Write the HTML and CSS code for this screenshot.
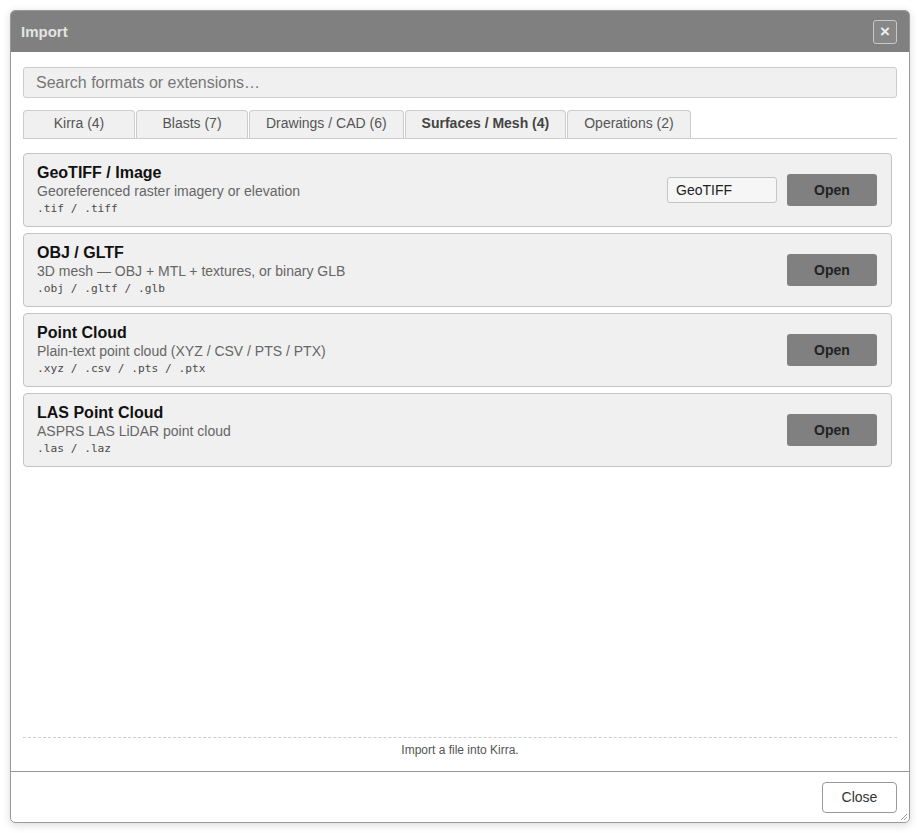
FILE: index.html
```html
<!DOCTYPE html>
<html>
    <head>
        <meta charset='utf-8'>
        <title>Import</title>
        <link rel="stylesheet" href="styles.css">
    </head>
    <body>
        <div class="dialog">
            <div class="titlebar">
                <span class="title">Import</span>
                <button class="x-btn">&times;</button>
            </div>
            <div class="content">
                <input class="search" type="text" placeholder="Search formats or extensions…">
                <div class="tabs">
                    <div class="tab">Kirra (4)</div>
                    <div class="tab">Blasts (7)</div>
                    <div class="tab">Drawings / CAD (6)</div>
                    <div class="tab active">Surfaces / Mesh (4)</div>
                    <div class="tab">Operations (2)</div>
                </div>
                <div class="list">
                    <div class="card">
                        <div class="info">
                            <div class="name">GeoTIFF / Image</div>
                            <div class="desc">Georeferenced raster imagery or elevation</div>
                            <div class="ext">.tif / .tiff</div>
                        </div>
                        <input class="kind" type="text" value="GeoTIFF">
                        <button class="open">Open</button>
                    </div>
                    <div class="card">
                        <div class="info">
                            <div class="name">OBJ / GLTF</div>
                            <div class="desc">3D mesh — OBJ + MTL + textures, or binary GLB</div>
                            <div class="ext">.obj / .gltf / .glb</div>
                        </div>
                        <button class="open">Open</button>
                    </div>
                    <div class="card">
                        <div class="info">
                            <div class="name">Point Cloud</div>
                            <div class="desc">Plain-text point cloud (XYZ / CSV / PTS / PTX)</div>
                            <div class="ext">.xyz / .csv / .pts / .ptx</div>
                        </div>
                        <button class="open">Open</button>
                    </div>
                    <div class="card">
                        <div class="info">
                            <div class="name">LAS Point Cloud</div>
                            <div class="desc">ASPRS LAS LiDAR point cloud</div>
                            <div class="ext">.las / .laz</div>
                        </div>
                        <button class="open">Open</button>
                    </div>
                </div>
                <div class="status">Import a file into Kirra.</div>
            </div>
            <div class="footer">
                <button class="close">Close</button>
            </div>
            <svg class="grip" width="8" height="8" viewBox="0 0 8 8">
                <path d="M7 1 L1 7 M7 4 L4 7" stroke="#999" stroke-width="1" fill="none"/>
            </svg>
        </div>
    </body>
</html>
```

FILE: styles.css
```css
body {
    margin: 0;
    padding: 10px;
    background: #fff;
    font: 14px "Liberation Sans", Arial, sans-serif;
    color: #333;
}
.dialog {
    position: relative;
    width: 898px;
    height: 811px;
    border: 1px solid #999;
    border-radius: 5px;
    box-shadow: 0 2px 8px rgba(0, 0, 0, 0.15);
    display: flex;
    flex-direction: column;
    overflow: hidden;
}
.titlebar {
    height: 41px;
    background: #808080;
    display: flex;
    align-items: center;
    justify-content: space-between;
    padding: 0 12px 0 10px;
    flex-shrink: 0;
}
.title {
    font-size: 15px;
    font-weight: bold;
    color: #e4e4e4;
}
.x-btn {
    width: 24px;
    height: 24px;
    padding: 0;
    border: 1px solid #c8c8c8;
    border-radius: 3px;
    background: #888;
    color: #eee;
    font: bold 17px/20px "Liberation Sans", Arial, sans-serif;
}
.content {
    flex: 1;
    display: flex;
    flex-direction: column;
    padding: 15px 12px 0 12px;
    min-height: 0;
}
.search {
    height: 31px;
    box-sizing: border-box;
    border: 1px solid #ccc;
    border-radius: 3px;
    background: #f0f0f0;
    padding: 0 12px;
    font: 16px "Liberation Sans", Arial, sans-serif;
    color: #333;
}
.search::placeholder {
    color: #777;
}
.tabs {
    display: flex;
    margin-top: 12px;
    border-bottom: 1px solid #ccc;
}
.tab {
    min-width: 112px;
    box-sizing: border-box;
    height: 28px;
    line-height: 25px;
    padding: 0 16px;
    margin-right: 1px;
    text-align: center;
    border: 1px solid #ccc;
    border-bottom: none;
    border-radius: 4px 4px 0 0;
    background: #f0f0f0;
    color: #555;
    box-shadow: 0 1px 0 #ccc;
}
.tab.active {
    font-weight: bold;
    color: #444;
}
.list {
    flex: 1;
    margin: 14px 5px 0 0;
    display: flex;
    flex-direction: column;
    gap: 6px;
}
.card {
    display: flex;
    align-items: center;
    gap: 10px;
    border: 1px solid #c4c4c4;
    border-radius: 4px;
    background: #f0f0f0;
    padding: 9px 14px 9px 13px;
}
.info {
    flex: 1;
}
.name {
    font-size: 16px;
    font-weight: bold;
    line-height: 20px;
    color: #111;
}
.desc {
    line-height: 17px;
    color: #666;
}
.ext {
    font: 11.2px/17px "DejaVu Sans Mono", monospace;
    color: #4a4a4a;
}
.kind {
    width: 110px;
    height: 26px;
    box-sizing: border-box;
    border: 1px solid #c4c4c4;
    border-radius: 3px;
    background: #f6f6f6;
    padding: 0 8px;
    font: 14px "Liberation Sans", Arial, sans-serif;
    color: #222;
}
.open {
    width: 90px;
    height: 32px;
    border: none;
    border-radius: 3px;
    background: #808080;
    font: bold 14px "Liberation Sans", Arial, sans-serif;
    color: #222;
}
.status {
    border-top: 1px dashed #ccc;
    margin-bottom: 14px;
    padding-top: 5px;
    text-align: center;
    font-size: 12px;
    line-height: 14px;
    color: #555;
}
.footer {
    height: 50px;
    border-top: 1px solid #999;
    display: flex;
    align-items: center;
    justify-content: flex-end;
    padding: 0 12px;
    flex-shrink: 0;
}
.close {
    width: 75px;
    height: 31px;
    border: 1px solid #999;
    border-radius: 4px;
    background: #fff;
    font: 14px "Liberation Sans", Arial, sans-serif;
    color: #333;
}
.grip {
    position: absolute;
    right: 1px;
    bottom: 1px;
}
```
